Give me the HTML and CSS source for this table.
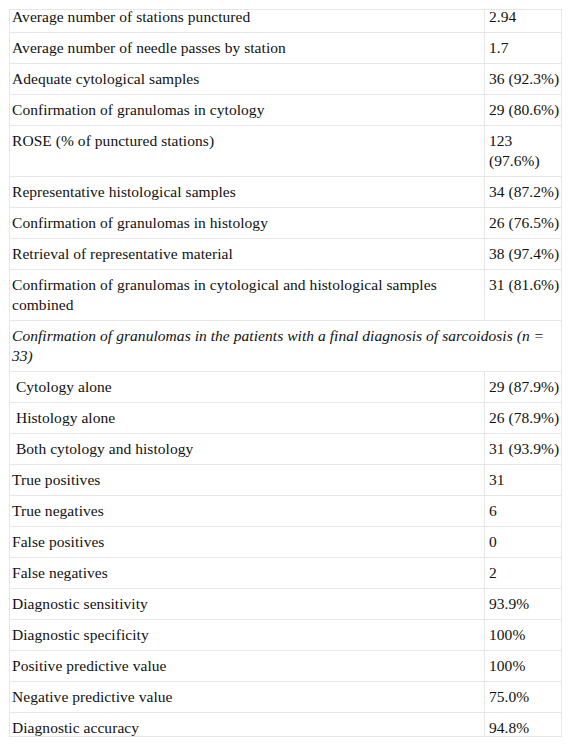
FILE: index.html
```html
<!DOCTYPE html>
<html>
<head>
<meta charset="utf-8">
<link rel="stylesheet" href="styles.css">
</head>
<body>
<div class="scroller">
<table class="data">
<colgroup><col class="c1"><col class="c2"></colgroup>
<tbody>
<tr><td>Average number of stations punctured</td><td class="v">2.94</td></tr>
<tr><td>Average number of needle passes by station</td><td class="v">1.7</td></tr>
<tr><td>Adequate cytological samples</td><td class="v">36 (92.3%)</td></tr>
<tr><td>Confirmation of granulomas in cytology</td><td class="v">29 (80.6%)</td></tr>
<tr><td>ROSE (% of punctured stations)</td><td class="v">123 (97.6%)</td></tr>
<tr><td>Representative histological samples</td><td class="v">34 (87.2%)</td></tr>
<tr><td>Confirmation of granulomas in histology</td><td class="v">26 (76.5%)</td></tr>
<tr><td>Retrieval of representative material</td><td class="v">38 (97.4%)</td></tr>
<tr><td>Confirmation of granulomas in cytological and histological samples combined</td><td class="v">31 (81.6%)</td></tr>
<tr><td colspan="2" class="sub">Confirmation of granulomas in the patients with a final diagnosis of sarcoidosis (n = 33)</td></tr>
<tr><td>&nbsp;Cytology alone</td><td class="v">29 (87.9%)</td></tr>
<tr><td>&nbsp;Histology alone</td><td class="v">26 (78.9%)</td></tr>
<tr><td>&nbsp;Both cytology and histology</td><td class="v">31 (93.9%)</td></tr>
<tr><td>True positives</td><td class="v">31</td></tr>
<tr><td>True negatives</td><td class="v">6</td></tr>
<tr><td>False positives</td><td class="v">0</td></tr>
<tr><td>False negatives</td><td class="v">2</td></tr>
<tr><td>Diagnostic sensitivity</td><td class="v">93.9%</td></tr>
<tr><td>Diagnostic specificity</td><td class="v">100%</td></tr>
<tr><td>Positive predictive value</td><td class="v">100%</td></tr>
<tr><td>Negative predictive value</td><td class="v">75.0%</td></tr>
<tr><td>Diagnostic accuracy</td><td class="v">94.8%</td></tr>
</tbody>
</table>
</div>
</body>
</html>
```
FILE: styles.css
```css
html, body {
  margin: 0;
  padding: 0;
  background: #ffffff;
}
body {
  padding: 9px 0 0 9px;
  font-family: "Liberation Serif", "Times New Roman", serif;
  color: #111111;
}
.scroller {
  box-sizing: border-box;
  width: 553px;
  height: 728px;
  border: 1px solid #e6e6e6;
  overflow: hidden;
}
.data {
  margin-top: -8px;
  width: 551px;
  table-layout: fixed;
  border-collapse: separate;
  border-spacing: 0;
  font-family: "Liberation Serif", "Times New Roman", serif;
  font-size: 15.5px;
  letter-spacing: 0.05px;
  line-height: 20px;
}
.c1 { width: 474px; }
.c2 { width: 77px; }
.data td {
  padding: 5px 2px 5px 2px;
  vertical-align: top;
  border-bottom: 1px solid #e6e6e6;
  text-align: left;
}
.data td.v {
  border-left: 1px solid #e6e6e6;
  padding-left: 4px;
  padding-right: 0;
}
.data td.sub {
  font-style: italic;
}
```
